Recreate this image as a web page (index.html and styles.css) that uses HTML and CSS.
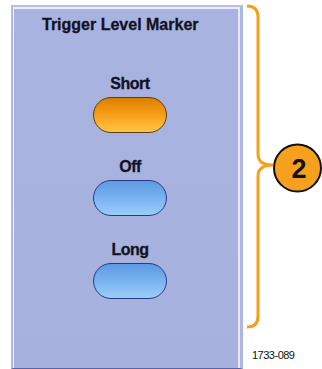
FILE: index.html
```html
<!DOCTYPE html>
<html>
<head>
<meta charset="utf-8">
<link rel="stylesheet" href="styles.css">
</head>
<body>
<div class="page">
  <div class="panel">
    <div class="panel-inner">
      <div class="title">Trigger Level Marker</div>
      <div class="options">
        <div class="option">
          <div class="label">Short</div>
          <div class="btn btn-on"></div>
        </div>
        <div class="option">
          <div class="label">Off</div>
          <div class="btn btn-off"></div>
        </div>
        <div class="option">
          <div class="label">Long</div>
          <div class="btn btn-off"></div>
        </div>
      </div>
    </div>
  </div>
  <div class="side">
    <svg class="callout" width="79" height="346" viewBox="0 0 79 346">
      <path d="M4,6 Q15,6 15,17 L15,154 Q15,165 30,165 Q15,165 15,176 L15,316 Q15,327 4,327" fill="none" stroke="#f5a01c" stroke-width="3"/>
      <circle cx="54.5" cy="168" r="23.5" fill="#f6a11e" stroke="#111" stroke-width="2"/>
      <text x="56" y="178" text-anchor="middle" class="num">2</text>
    </svg>
    <div class="fig">1733-089</div>
  </div>
</div>
</body>
</html>
```
FILE: styles.css
```css
html, body {
  margin: 0;
  padding: 0;
  background: #ffffff;
}
.page {
  display: flex;
  width: 322px;
  height: 369px;
  overflow: hidden;
  font-family: "Liberation Sans", Arial, sans-serif;
}
.panel {
  margin: 5px 0 0 11px;
  width: 232px;
  height: 364px;
  box-sizing: border-box;
  border-top: 2px solid #b7bde6;
  border-left: 2px solid #b3bae5;
  border-right: 3px solid #aeb6e2;
  border-bottom: 1px solid #5a62a8;
  display: flex;
}
.panel-inner {
  flex: 1;
  border-top: 2px solid #eceef9;
  border-left: 1px solid #eceef9;
  border-right: 2px solid #e6e9f7;
  background: linear-gradient(#a9b3df, #a7b1de);
  display: flex;
  flex-direction: column;
  align-items: flex-start;
  padding-top: 7px;
}
.title {
  margin-left: 28px;
  font-size: 16px;
  line-height: 18px;
  font-weight: bold;
  color: #11131f;
  letter-spacing: 0px;
  -webkit-text-stroke: 0.3px #11131f;
}
.options {
  margin-left: 79px;
  margin-top: 41px;
  display: flex;
  flex-direction: column;
  gap: 25px;
}
.option {
  display: flex;
  flex-direction: column;
  align-items: center;
  gap: 4px;
  width: 74px;
}
.label {
  font-size: 16px;
  line-height: 18px;
  font-weight: bold;
  color: #11131f;
  letter-spacing: -0.5px;
  -webkit-text-stroke: 0.3px #11131f;
}
.btn {
  width: 74px;
  height: 36px;
  box-sizing: border-box;
  border-radius: 18px;
}
.btn-on {
  border: 1.5px solid #5c3c12;
  background: linear-gradient(#d98000 0%, #f19410 35%, #fdb230 75%, #ffc24a 100%);
}
.btn-off {
  border: 1.5px solid #263a86;
  background: linear-gradient(#5e9ae2 0%, #73adee 40%, #8cc2f6 80%, #9ccdf8 100%);
}
.side {
  display: flex;
  flex-direction: column;
  width: 79px;
}
.callout {
  display: block;
}
.num {
  font-family: "Liberation Sans", Arial, sans-serif;
  font-weight: bold;
  font-size: 27px;
  fill: #111111;
}
.fig {
  margin-left: 9px;
  margin-top: 3px;
  font-size: 11px;
  line-height: 13px;
  color: #111111;
  letter-spacing: -0.5px;
}
```
